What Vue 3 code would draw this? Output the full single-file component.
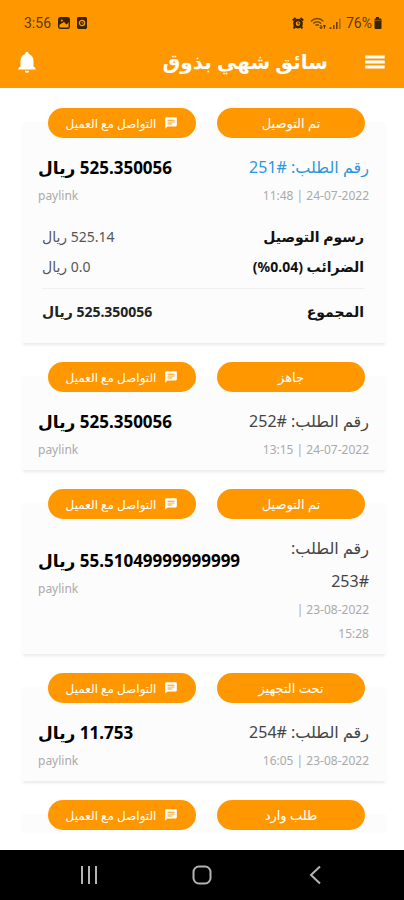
<template>
  <div class="screen" dir="rtl">
    <header class="top">
      <div class="status" dir="ltr">
        <div class="status-side">
          <span>3:56</span>
          <svg class="left-icon" width="12" height="12" viewBox="0 0 12 12">
            <rect x="0.7" y="0.7" width="10.6" height="10.6" rx="1.6" fill="none" stroke="#3a2400" stroke-width="1.4" />
            <path d="M1 1h10v4L8.5 7.5 6 5 1 8z" fill="#3a2400" />
            <circle cx="3.8" cy="3.6" r="1" fill="#ff9800" />
          </svg>
          <svg class="left-icon" width="10" height="12" viewBox="0 0 10 12">
            <rect width="10" height="12" rx="1.4" fill="#3a2400" />
            <circle cx="5" cy="6" r="2.6" fill="none" stroke="#ff9800" stroke-width="1.3" />
            <path d="M5 4.8v1.4h1" fill="none" stroke="#ff9800" stroke-width="0.7" />
          </svg>
        </div>
        <div class="status-side">
          <svg width="12" height="12" viewBox="0 0 12 12">
            <circle cx="6" cy="6.6" r="3.6" fill="none" stroke="#3a2400" stroke-width="2.6" />
            <path d="M0.8 3.4 3.6 0.9M11.2 3.4 8.4 0.9M2.8 9.6 1.8 11.4M9.2 9.6l1 1.8" stroke="#3a2400" stroke-width="2" />
            <path d="M6 4.8v2h1.6" fill="none" stroke="#3a2400" stroke-width="1" />
          </svg>
          <svg class="wifi" width="17" height="12" viewBox="0 0 17 12">
            <path d="M1 4.4C4.6 0.6 10 0.6 13.4 4.4M3.2 6.6c2.4-2.4 5.8-2.4 8 0M5.4 8.6c1.2-1.2 2.600-1.2 3.600 0" fill="none" stroke="#7a4a08" stroke-width="1.4" />
            <path d="M11 8v3.400M9.700 10.200l1.300 1.400 1.300-1.400M14.400 11.600V8M13.100 9.400 14.400 8l1.300 1.400" fill="none" stroke="#3a2400" stroke-width="1" />
          </svg>
          <svg class="signal" width="12" height="11" viewBox="0 0 12 11">
            <path d="M0.500 9.200h2V11h-2zM4 7h1.600v4H4zM7 4h1.600v7H7z" fill="#6b4108" />
            <path d="M10 0.500h1.600V11H10z" fill="#a8660a" />
          </svg>
          <span class="battery-text">76%</span>
          <svg width="9" height="12" viewBox="0 0 9 12">
            <path d="M3 0h3v1.600h1.600q.9 0 .9.9V11q0 1-1 1h-5q-1 0-1-1V2.500q0-.9.9-.9H3z" fill="#3a2400" />
            <path d="M1 3.300h7" stroke="#a8660a" stroke-width="0.8" />
          </svg>
        </div>
      </div>
      <div class="app-bar">
        <button class="icon-btn" aria-label="القائمة">
          <svg width="26" height="26" viewBox="0 0 24 24" fill="#fff">
            <path d="M3 18h18v-2.700H3zM3 13.350h18v-2.700H3zM3 6v2.700h18V6z" />
          </svg>
        </button>
        <h1 class="app-title">سائق شهي بذوق</h1>
        <button class="icon-btn" aria-label="الإشعارات">
          <svg width="26" height="26" viewBox="0 0 24 24" fill="#fff">
            <path d="M12 22c1.100 0 2-.9 2-2h-4c0 1.100.9 2 2 2zm6-6v-5c0-3.070-1.640-5.640-4.500-6.320V4c0-.83-.67-1.500-1.500-1.500s-1.500.67-1.500 1.500v.68C7.630 5.360 6 7.920 6 11v5l-2 2v1h16v-1z" />
          </svg>
        </button>
      </div>
    </header>

    <main class="orders">
      <article v-for="(order, index) in orders" :key="index" class="order-card">
        <div class="actions">
          <button class="pill">{{ order.status }}</button>
          <button class="pill contact">
            <svg width="14" height="14" viewBox="0 0 24 24" fill="#fff">
              <path d="M20 2H4c-1.100 0-2 .9-2 2v18l4-4h14c1.100 0 2-.9 2-2V4c0-1.100-.9-2-2-2zM6 6.500h12v1.600H6zm0 3.200h12v1.600H6zm8 4.900H6V13h8z" fill-rule="evenodd" />
            </svg>
            <span>التواصل مع العميل</span>
          </button>
        </div>

        <div v-if="order.number" class="summary">
          <div class="info">
            <p class="number" :class="{ active: order.fees }">رقم الطلب: {{ order.number }}</p>
            <p class="muted">{{ order.date }} | {{ order.time }}</p>
          </div>
          <div class="amount" :class="{ long: order.total.length > 12 }">
            <p class="price">{{ order.total }} ريال</p>
            <p class="muted">paylink</p>
          </div>
        </div>

        <dl v-if="order.fees" class="fees">
          <div v-for="fee in order.fees" :key="fee.label" class="fee" :class="{ sum: fee.sum }">
            <dt>{{ fee.label }} <bdi v-if="fee.rate" dir="rtl">{{ fee.rate }}</bdi></dt>
            <dd>{{ fee.value }} ريال</dd>
          </div>
        </dl>
      </article>
    </main>

    <nav class="system-nav" dir="ltr">
      <button class="nav-btn" aria-label="Recents">
        <svg width="20" height="20" viewBox="0 0 20 20" stroke="#b4b4b4" stroke-width="2">
          <path d="M3 1v18M10 1v18M17 1v18" />
        </svg>
      </button>
      <button class="nav-btn" aria-label="Home">
        <svg width="20" height="20" viewBox="0 0 20 20" fill="none" stroke="#b4b4b4" stroke-width="2">
          <rect x="1.500" y="1.500" width="17" height="17" rx="5.500" />
        </svg>
      </button>
      <button class="nav-btn" aria-label="Back">
        <svg width="20" height="20" viewBox="0 0 20 20" fill="none" stroke="#b4b4b4" stroke-width="2">
          <path d="M15 1.500 6 10l9 8.500" />
        </svg>
      </button>
    </nav>
  </div>
</template>

<script setup>
import { ref } from "vue";

const orders = ref([
  {
    status: "تم التوصيل",
    number: "#251",
    date: "24-07-2022",
    time: "11:48",
    total: "525.350056",
    fees: [
      { label: "رسوم التوصيل", value: "525.14" },
      { label: "الضرائب", rate: "(%0.04)", value: "0.0" },
      { label: "المجموع", value: "525.350056", sum: true },
    ],
  },
  { status: "جاهز", number: "#252", date: "24-07-2022", time: "13:15", total: "525.350056" },
  { status: "تم التوصيل", number: "#253", date: "23-08-2022", time: "15:28", total: "55.51049999999999" },
  { status: "تحت التجهيز", number: "#254", date: "23-08-2022", time: "16:05", total: "11.753" },
  { status: "طلب وارد" },
]);
</script>

<style>
body {
  margin: 0;
  background: #fff;
}
</style>

<style scoped>
.screen {
  display: flex;
  flex-direction: column;
  height: 100vh;
  overflow: hidden;
  font-family: "Noto Sans", "DejaVu Sans", sans-serif;
  color: #111;
}

p,
h1,
dl,
dd {
  margin: 0;
}

button {
  border: none;
  padding: 0;
  background: none;
  font-family: inherit;
  cursor: pointer;
}

svg {
  display: block;
  flex-shrink: 0;
}

.top {
  flex-shrink: 0;
  background: #ff9800;
}

.status {
  display: flex;
  justify-content: space-between;
  align-items: center;
  height: 26px;
  padding: 10px 22px 0 24px;
  font-family: Roboto, sans-serif;
  font-size: 14px;
  color: #5c3a08;
}

.status-side {
  display: flex;
  align-items: center;
}

.left-icon {
  margin-left: 7px;
}

.wifi {
  margin-left: 6px;
}

.signal {
  margin-left: 2px;
}

.battery-text {
  margin: 0 1px 0 5px;
}

.app-bar {
  display: flex;
  align-items: center;
  height: 52px;
  padding: 0 16px 0 14px;
}

.app-title {
  flex: 1;
  margin-right: 34px;
  font-size: 20px;
  line-height: 40px;
  font-weight: bold;
  color: #fff;
}

.orders {
  flex: 1;
  min-height: 0;
  overflow: hidden;
  margin-bottom: 17px;
  padding: 20px 18px 0 22px;
}

.order-card {
  margin: 14px 0 33px;
  padding: 0 17px 8px 16px;
  min-height: 40px;
  background: #fcfcfc;
  box-shadow: 0 3px 3px -1px #eaeaea;
}

.actions {
  display: flex;
  gap: 21px;
  padding: 0 4px 0 10px;
  position: relative;
  top: -14px;
  margin-bottom: -1px;
}

.pill {
  flex: 1 1 0;
  display: flex;
  align-items: center;
  justify-content: center;
  gap: 8px;
  height: 30px;
  border-radius: 15px;
  background: #ff9800;
  color: #fff;
  font-size: 13px;
  white-space: nowrap;
}

.contact {
  font-size: 12px;
}

.summary {
  display: flex;
  justify-content: space-between;
  gap: 30px;
}

.info {
  flex: 1 1 0;
  min-width: 0;
}

.number {
  font-size: 16px;
  line-height: 33px;
  color: #444;
}

.number.active {
  color: #2e96dc;
}

.muted {
  font-size: 12px;
  line-height: 24px;
  color: #aaa;
}

.amount {
  text-align: left;
  white-space: nowrap;
}

.amount.long {
  padding-top: 12px;
}

.price {
  font-size: 17px;
  line-height: 33px;
  font-weight: bold;
  color: #000;
}

.fees {
  padding: 14px 5px 8px 4px;
}

.fee {
  display: flex;
  justify-content: space-between;
  font-size: 14px;
  line-height: 30px;
}

.fee dt {
  font-weight: bold;
}

.fee dd {
  color: #555;
}

.fee.sum {
  margin-top: 6px;
  padding-top: 8px;
  border-top: 1px solid #f0f0f0;
}

.fee.sum dd {
  font-weight: bold;
  color: #222;
}

.system-nav {
  display: flex;
  justify-content: space-around;
  align-items: center;
  flex-shrink: 0;
  height: 50px;
  padding: 0 32px;
  background: #000;
}

.nav-btn {
  padding: 4px;
}
</style>
